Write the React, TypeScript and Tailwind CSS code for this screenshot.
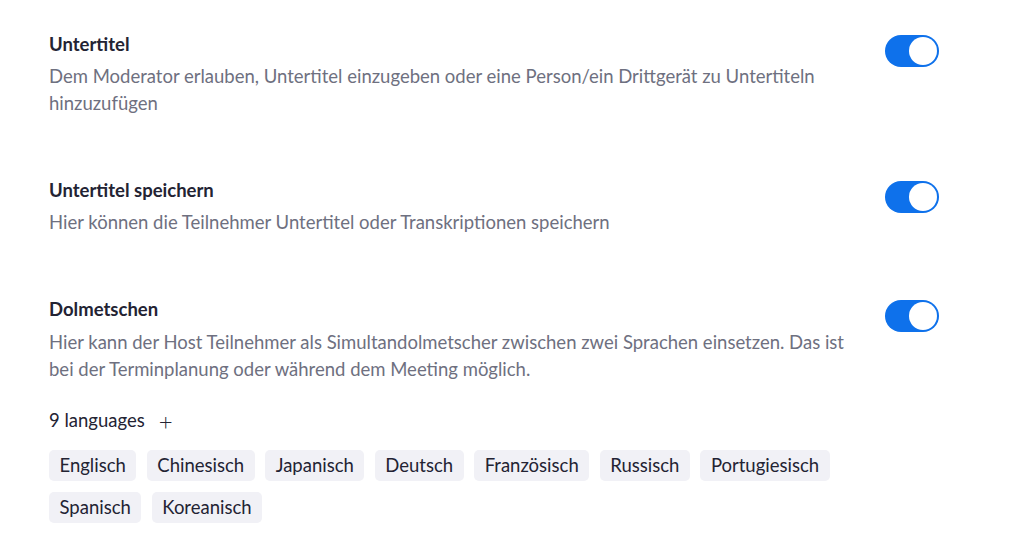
import React from "react";

function Toggle() {
  return (
    <div className="mt-[3px] flex h-[32px] w-[54px] shrink-0 items-center justify-end rounded-full bg-[#0e71eb] pr-[2px]">
      <div className="h-[28px] w-[28px] rounded-full bg-white" />
    </div>
  );
}

function Section({ title, desc, descClass, children }: { title: string; desc: string; descClass: string; children?: React.ReactNode }) {
  return (
    <div className="flex justify-between">
      <div className="w-[815px]">
        <div className="text-[18.5px] font-bold leading-[24px] text-[#232333]">{title}</div>
        <div className={descClass}>{desc}</div>
        {children}
      </div>
      <Toggle />
    </div>
  );
}

const langs = ["Englisch", "Chinesisch", "Japanisch", "Deutsch", "Französisch", "Russisch", "Portugiesisch", "Spanisch", "Koreanisch"];

export default function App() {
  return (
    <div className="h-[558px] w-[1024px] bg-white pl-[49px] pr-[85px] pt-[32px]" style={{ fontFamily: "Lato, 'Noto Sans', sans-serif" }}>
      <div className="flex flex-col gap-[61px]">
        <Section
          title="Untertitel"
          descClass="mt-[7px] text-[18.5px] leading-[27px] text-[#6e7080]"
          desc="Dem Moderator erlauben, Untertitel einzugeben oder eine Person/ein Drittgerät zu Untertiteln hinzuzufügen"
        />
        <Section
          title="Untertitel speichern"
          descClass="mt-[7px] text-[18.5px] leading-[27px] text-[#6e7080]"
          desc="Hier können die Teilnehmer Untertitel oder Transkriptionen speichern"
        />
        <Section
          title="Dolmetschen"
          descClass="mt-[8px] text-[18.5px] leading-[27px] text-[#6e7080]"
          desc="Hier kann der Host Teilnehmer als Simultandolmetscher zwischen zwei Sprachen einsetzen. Das ist bei der Terminplanung oder während dem Meeting möglich."
        >
          <div className="mt-[24px] flex items-center gap-[14px] text-[18.5px] leading-[27px] text-[#232333]">
            <span>9 languages</span>
            <span className="text-[24px] font-light leading-[27px]">+</span>
          </div>
          <div className="mt-[16px] flex flex-wrap gap-[10.5px]">
            {langs.map((l) => (
              <span key={l} className="rounded-[5px] bg-[#f1f1f6] px-[10.5px] text-[18.5px] leading-[31px] text-[#232333]">
                {l}
              </span>
            ))}
          </div>
        </Section>
      </div>
    </div>
  );
}
